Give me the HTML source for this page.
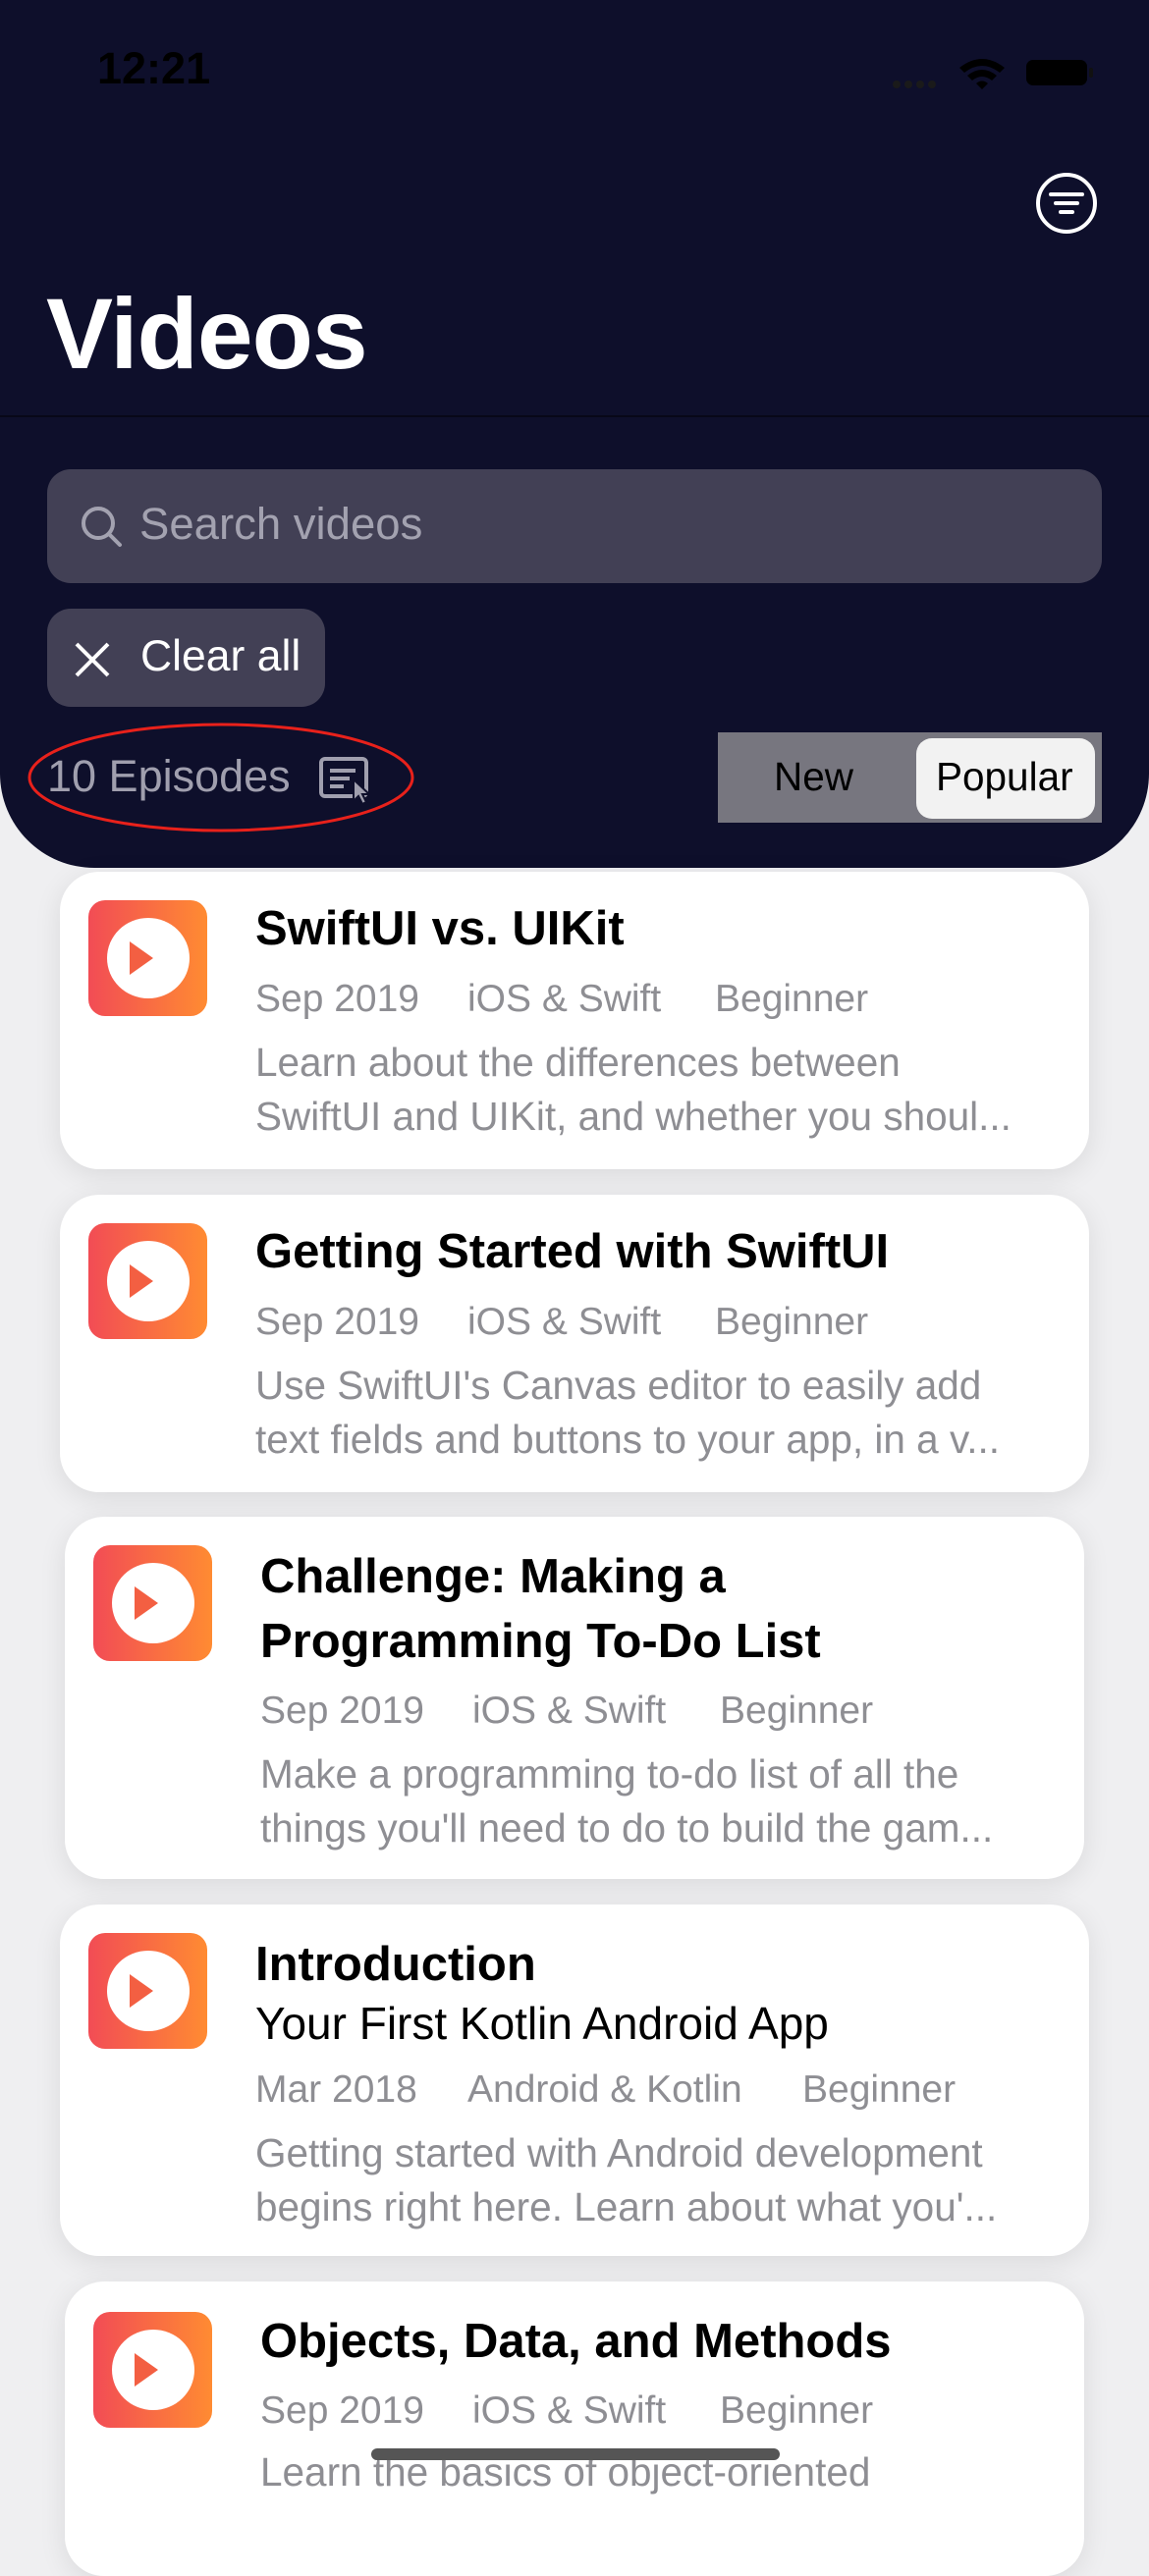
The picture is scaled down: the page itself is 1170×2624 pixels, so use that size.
<!DOCTYPE html>
<html><head><meta charset="utf-8"><style>
*{margin:0;padding:0;box-sizing:border-box}
body{width:1170px;height:2532px;overflow:hidden;background:#efeff1;font-family:"Liberation Sans",sans-serif;position:relative}
.hdr{position:absolute;left:0;top:0;width:1170px;height:884px;background:#0e0f2b;border-radius:0 0 96px 96px}
.abs{position:absolute}
.card{position:absolute;background:#fff;border-radius:40px;box-shadow:0 6px 28px rgba(0,0,0,0.09)}
.ic{position:absolute;width:121px;height:118px;border-radius:17px;background:linear-gradient(90deg,#f24c55,#ff8b32)}
.ic .c{position:absolute;left:19px;top:18px;width:84px;height:82px;border-radius:50%;background:#fff}
.ic .t{position:absolute;left:42px;top:42px;width:0;height:0;border-top:17px solid transparent;border-bottom:17px solid transparent;border-left:24px solid #f35f42}
.ti{position:absolute;font-weight:bold;font-size:49px;color:#000;white-space:nowrap;line-height:66px}
.me{position:absolute;font-size:39px;color:#8e8e93;white-space:nowrap;line-height:50px}
.de{position:absolute;font-size:40.5px;color:#8e8e93;white-space:nowrap;line-height:55px}
</style></head><body>
<div class="hdr"></div>
<div class="abs" style="left:99px;top:44px;font-size:45px;font-weight:bold;color:#000">12:21</div>
<svg class="abs" style="left:905px;top:55px" width="210" height="40" viewBox="0 0 210 40">
<circle cx="8" cy="31" r="4" fill="#1a1a1a"/><circle cx="20" cy="31" r="4" fill="#1a1a1a"/><circle cx="32" cy="31" r="4" fill="#1a1a1a"/><circle cx="44" cy="31" r="4" fill="#1a1a1a"/>
<path d="M72 14 Q95 -4 118 14 L113 19 Q95 5 77 19Z M80 22 Q95 10 110 22 L105 27 Q95 19 85 27Z M89 30 Q95 25 101 30 L95 36Z" fill="#000"/>
<rect x="140" y="6" width="62" height="26" rx="7" fill="#000"/><rect x="204" y="14" width="4" height="10" rx="2" fill="#111"/>
</svg>
<svg class="abs" style="left:1053px;top:174px" width="66" height="66" viewBox="0 0 66 66">
<circle cx="33" cy="33" r="29" fill="none" stroke="#fff" stroke-width="4"/>
<path d="M17 24H49M22 33H44M27 42H39" stroke="#fff" stroke-width="4" stroke-linecap="round"/>
</svg>
<div class="abs" style="left:47px;top:282px;font-size:102px;font-weight:bold;color:#fff;letter-spacing:-1px">Videos</div>
<div class="abs" style="left:0;top:423px;width:1170px;height:2px;background:#080818"></div>
<div class="abs" style="left:48px;top:478px;width:1074px;height:116px;border-radius:24px;background:#424055"></div>
<svg class="abs" style="left:80px;top:513px" width="48" height="48" viewBox="0 0 48 48"><circle cx="20" cy="20" r="15" fill="none" stroke="#a3a2b0" stroke-width="4"/><path d="M31 31L42 42" stroke="#a3a2b0" stroke-width="4" stroke-linecap="round"/></svg>
<div class="abs" style="left:142px;top:508px;font-size:45.5px;color:#a3a2b0">Search videos</div>
<div class="abs" style="left:48px;top:620px;width:283px;height:100px;border-radius:24px;background:#424055"></div>
<svg class="abs" style="left:74px;top:652px" width="40" height="40" viewBox="0 0 40 40"><path d="M4 4L36 36M36 4L4 36" stroke="#fff" stroke-width="4"/></svg>
<div class="abs" style="left:143px;top:644px;font-size:44.5px;color:#fff">Clear all</div>
<div class="abs" style="left:48px;top:765px;font-size:45px;color:#a09fae">10 Episodes</div>
<svg class="abs" style="left:324px;top:770px" width="56" height="50" viewBox="0 0 56 50"><rect x="3" y="3" width="46" height="38" rx="4" fill="none" stroke="#a09fae" stroke-width="4"/><path d="M12 15H38M12 23H32M12 31H26" stroke="#a09fae" stroke-width="4"/><path d="M36 24L36 46L41 41L45 49L49 47L45 39L52 39Z" fill="#a09fae" stroke="#0e0f2b" stroke-width="2"/></svg>
<svg class="abs" style="left:27px;top:734px" width="398" height="116" viewBox="0 0 398 116"><ellipse cx="198" cy="58" rx="195" ry="54" fill="none" stroke="#e8211b" stroke-width="3"/></svg>
<div class="abs" style="left:731px;top:746px;width:391px;height:92px;background:#77767f"></div>
<div class="abs" style="left:933px;top:752px;width:182px;height:82px;border-radius:16px;background:#f2f2f2"></div>
<div class="abs" style="left:788px;top:768px;font-size:40.5px;color:#000">New</div>
<div class="abs" style="left:953px;top:768px;font-size:40.5px;color:#000">Popular</div>

<div class="card" style="left:61px;top:888px;width:1048px;height:303px">
<div class="ic" style="left:29px;top:29px"><div class="c"></div><div class="t"></div></div>
<div class="ti" style="left:199px;top:25px">SwiftUI vs. UIKit</div>
<div class="me" style="left:199px;top:105px">Sep 2019</div><div class="me" style="left:415px;top:105px">iOS &amp; Swift</div><div class="me" style="left:667px;top:105px">Beginner</div>
<div class="de" style="left:199px;top:167px">Learn about the differences between<br>SwiftUI and UIKit, and whether you shoul...</div>
</div>

<div class="card" style="left:61px;top:1217px;width:1048px;height:303px">
<div class="ic" style="left:29px;top:29px"><div class="c"></div><div class="t"></div></div>
<div class="ti" style="left:199px;top:25px">Getting Started with SwiftUI</div>
<div class="me" style="left:199px;top:105px">Sep 2019</div><div class="me" style="left:415px;top:105px">iOS &amp; Swift</div><div class="me" style="left:667px;top:105px">Beginner</div>
<div class="de" style="left:199px;top:167px">Use SwiftUI's Canvas editor to easily add<br>text fields and buttons to your app, in a v...</div>
</div>

<div class="card" style="left:66px;top:1545px;width:1038px;height:369px">
<div class="ic" style="left:29px;top:29px"><div class="c"></div><div class="t"></div></div>
<div class="ti" style="left:199px;top:28px">Challenge: Making a<br>Programming To-Do List</div>
<div class="me" style="left:199px;top:173px">Sep 2019</div><div class="me" style="left:415px;top:173px">iOS &amp; Swift</div><div class="me" style="left:667px;top:173px">Beginner</div>
<div class="de" style="left:199px;top:235px">Make a programming to-do list of all the<br>things you'll need to do to build the gam...</div>
</div>

<div class="card" style="left:61px;top:1940px;width:1048px;height:358px">
<div class="ic" style="left:29px;top:29px"><div class="c"></div><div class="t"></div></div>
<div class="ti" style="left:199px;top:28px">Introduction</div>
<div class="abs" style="left:199px;top:94px;font-size:46px;color:#000;white-space:nowrap">Your First Kotlin Android App</div>
<div class="me" style="left:199px;top:164px">Mar 2018</div><div class="me" style="left:415px;top:164px">Android &amp; Kotlin</div><div class="me" style="left:756px;top:164px">Beginner</div>
<div class="de" style="left:199px;top:226px">Getting started with Android development<br>begins right here. Learn about what you'...</div>
</div>

<div class="card" style="left:66px;top:2324px;width:1038px;height:300px">
<div class="ic" style="left:29px;top:31px"><div class="c"></div><div class="t"></div></div>
<div class="ti" style="left:199px;top:28px">Objects, Data, and Methods</div>
<div class="me" style="left:199px;top:107px">Sep 2019</div><div class="me" style="left:415px;top:107px">iOS &amp; Swift</div><div class="me" style="left:667px;top:107px">Beginner</div>
<div class="de" style="left:199px;top:167px">Learn the basics of object-oriented</div>
</div>
<div class="abs" style="left:378px;top:2494px;width:416px;height:12px;border-radius:6px;background:#555"></div>
</body></html>
